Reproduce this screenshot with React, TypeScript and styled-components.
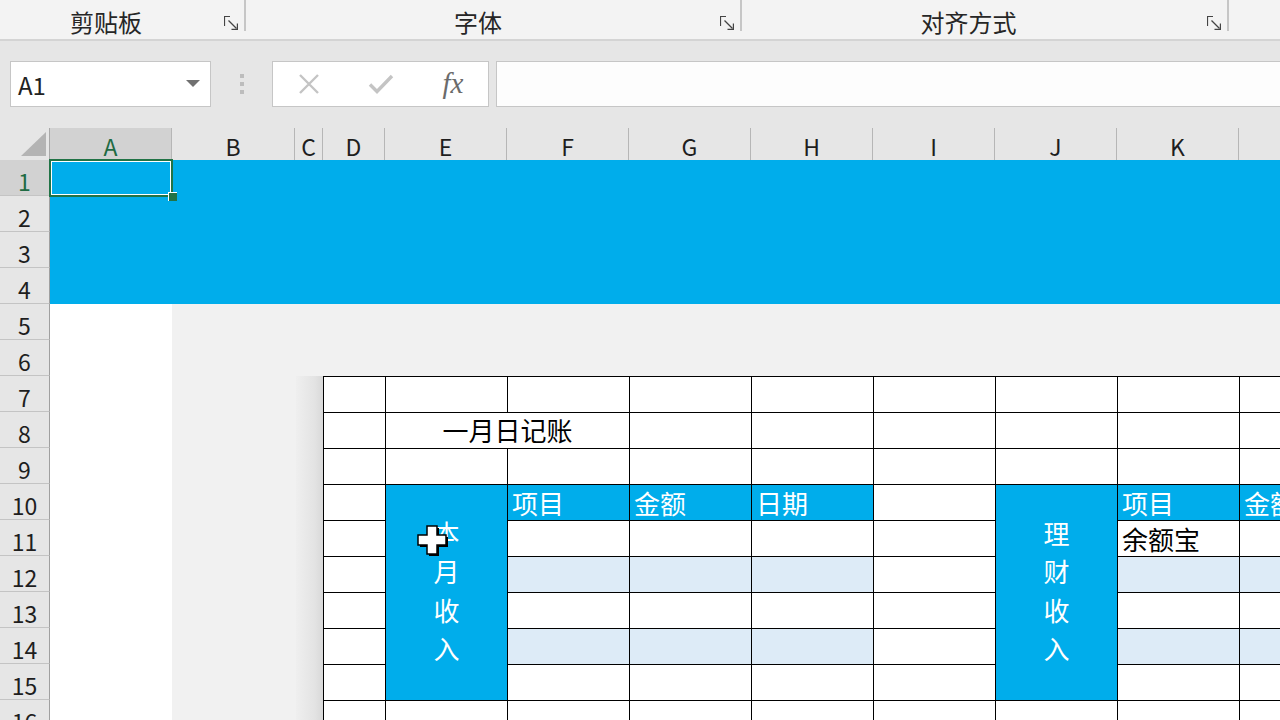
import React from 'react';
import styled, { createGlobalStyle } from 'styled-components';

const FONT = `"Noto Sans CJK SC", "Noto Sans", "Liberation Sans", sans-serif`;

const GlobalStyle = createGlobalStyle`
  html, body { margin: 0; padding: 0; background: #e6e6e6; }
  body { font-family: ${FONT}; }
  *, *::before, *::after { box-sizing: border-box; }
`;

const Root = styled.div`
  position: relative;
  width: 1280px;
  height: 720px;
  overflow: hidden;
  background: #e6e6e6;
  display: flex;
  flex-direction: column;
`;

/* ---------- ribbon group labels ---------- */
const RibbonBar = styled.div`
  display: flex;
  height: 41px;
  flex-shrink: 0;
  background: #f3f3f3;
  border-bottom: 2px solid #d4d4d4;
`;

const RibbonGroup = styled.div<{ $w: number; $pr: number }>`
  position: relative;
  flex-shrink: 0;
  width: ${(p) => p.$w}px;
  height: 31px;
  border-right: 2px solid #c6c6c6;
  display: flex;
  justify-content: center;
  align-items: flex-start;
  padding-top: 10px;
  padding-right: ${(p) => p.$pr}px;
  font-size: 24px;
  line-height: 24px;
  color: #262626;
  white-space: nowrap;
`;

const Launcher = styled.svg`
  position: absolute;
  right: 6px;
  top: 16px;
`;

/* ---------- formula bar ---------- */
const FormulaRow = styled.div`
  display: flex;
  align-items: flex-start;
  height: 87px;
  flex-shrink: 0;
  padding: 20px 0 0 10px;
`;

const NameBox = styled.div`
  width: 201px;
  height: 46px;
  background: #fff;
  border: 1px solid #c6c6c6;
  display: flex;
  align-items: center;
  justify-content: space-between;
  padding: 0 10px 0 7px;
  font-size: 24px;
  color: #222;
`;

const Dots = styled.div`
  width: 61px;
  height: 46px;
  display: flex;
  flex-direction: column;
  align-items: center;
  justify-content: center;
  gap: 4px;
`;

const Dot = styled.span`
  width: 4px;
  height: 4px;
  background: #bdbdbd;
`;

const FxBox = styled.div`
  width: 217px;
  height: 46px;
  background: #fff;
  border: 1px solid #c6c6c6;
  display: grid;
  grid-template-columns: repeat(3, 72px);
  align-items: center;
  justify-items: center;
`;

const FxText = styled.span`
  font-family: "Liberation Serif", "DejaVu Serif", serif;
  font-style: italic;
  font-size: 29px;
  line-height: 1;
  color: #6b6b6b;
  margin-top: -2px;
`;

const FormulaInput = styled.div`
  flex: 1;
  height: 46px;
  margin-left: 7px;
  background: #fdfdfd;
  border: 1px solid #c6c6c6;
  border-right: none;
`;

/* ---------- sheet ---------- */
const COLS = ['A', 'B', 'C', 'D', 'E', 'F', 'G', 'H', 'I', 'J', 'K', 'L'];
const COL_W = [122, 123, 28, 62, 122, 122, 122, 122, 122, 122, 122, 122];

const Sheet = styled.div`
  display: grid;
  grid-template-columns: 50px ${COL_W.map((w) => `${w}px`).join(' ')};
  grid-template-rows: 32px repeat(16, 36px);
  flex-shrink: 0;
`;

const Corner = styled.div`
  grid-column: 1;
  grid-row: 1;
  background: #e6e6e6;
  border-right: 1px solid #a8a8a8;
  display: flex;
  align-items: flex-end;
  justify-content: flex-end;
  padding: 0 3px 4px 0;
`;

const ColHeader = styled.div<{ $sel?: boolean }>`
  grid-row: 1;
  background: ${(p) => (p.$sel ? '#d2d2d2' : '#e6e6e6')};
  color: ${(p) => (p.$sel ? '#1f6b43' : '#1e1e1e')};
  border-right: 1px solid #b6b6b6;
  display: flex;
  align-items: center;
  justify-content: center;
  padding-top: 4px;
  font-size: 23px;
  line-height: 1;
`;

const RowHeader = styled.div<{ $sel?: boolean }>`
  grid-column: 1;
  background: ${(p) => (p.$sel ? '#d2d2d2' : '#e6e6e6')};
  color: ${(p) => (p.$sel ? '#1f6b43' : '#1e1e1e')};
  border-right: 1px solid #a0a0a0;
  border-bottom: 1px solid #c4c4c4;
  display: flex;
  align-items: center;
  justify-content: center;
  padding-top: 8px;
  font-size: 23px;
  line-height: 1;
`;

const BlueBand = styled.div`
  grid-column: 2 / -1;
  grid-row: 2 / 6;
  background: #00adeb;
`;

const WhiteColumn = styled.div`
  grid-column: 2;
  grid-row: 6 / -1;
  background: #fff;
`;

const GreyArea = styled.div`
  grid-column: 3 / -1;
  grid-row: 6 / -1;
  background: #f1f1f1;
`;

const PictureShadow = styled.div`
  grid-column: 4;
  grid-row: 8 / -1;
  margin-left: 1px;
  background: linear-gradient(to right, #efefef, #e3e3e3 70%, #d8d8d8);
`;

const Selection = styled.div`
  grid-column: 2;
  grid-row: 2;
  margin: -1px -1px -1px -1px;
  position: relative;
  z-index: 2;
  border: 2px solid #217346;
  box-shadow: inset 0 0 0 1px #ffffff;
  &::after {
    content: '';
    position: absolute;
    right: -6px;
    bottom: -6px;
    width: 9px;
    height: 9px;
    background: #217346;
    border-left: 1px solid #ffffff;
    border-top: 1px solid #ffffff;
  }
`;

/* ---------- the table ---------- */
const Table = styled.div`
  grid-column: 5 / -1;
  grid-row: 8 / -1;
  display: grid;
  grid-template-columns: 62px repeat(8, 122px);
  grid-template-rows: repeat(10, 36px);
  border-top: 1px solid #000;
  border-left: 1px solid #000;
  z-index: 1;
`;

type Tone = 'white' | 'blue' | 'light';
const TONE_BG: Record<Tone, string> = { white: '#ffffff', blue: '#00adeb', light: '#ddebf7' };

const TCell = styled.div<{ $c: number; $r: number; $cs: number; $rs: number; $tone: Tone }>`
  grid-column: ${(p) => p.$c + 1} / span ${(p) => p.$cs};
  grid-row: ${(p) => p.$r + 1} / span ${(p) => p.$rs};
  background: ${(p) => TONE_BG[p.$tone]};
  color: ${(p) => (p.$tone === 'blue' ? '#ffffff' : '#000000')};
  border-right: 1px solid #000;
  border-bottom: 1px solid #000;
  display: flex;
  align-items: center;
  padding-left: 4px;
  font-size: 26px;
  line-height: 1.2;
  white-space: nowrap;
  overflow: hidden;
`;

const TitleCell = styled(TCell)`
  justify-content: center;
  padding: 0 0 2px 0;
  overflow: visible;
`;

const VerticalCell = styled(TCell)`
  flex-direction: column;
  justify-content: center;
  padding: 0 0 4px 0;
  line-height: 38.5px;
`;

const Cursor = styled.svg`
  position: absolute;
  left: 415px;
  top: 523px;
  z-index: 5;
`;

type CellSpec = { c: number; r: number; cs?: number; rs?: number; tone?: Tone; text?: string; kind?: 'title' | 'vertical' };

function buildCells(): CellSpec[] {
  const merges: CellSpec[] = [
    { r: 1, c: 1, cs: 2, text: '一月日记账', kind: 'title' },
    { r: 3, c: 1, rs: 6, tone: 'blue', text: '本月收入', kind: 'vertical' },
    { r: 3, c: 6, rs: 6, tone: 'blue', text: '理财收入', kind: 'vertical' },
  ];
  const covered = (r: number, c: number) =>
    merges.some((m) => r >= m.r && r < m.r + (m.rs ?? 1) && c >= m.c && c < m.c + (m.cs ?? 1));
  const headers: Record<number, string> = { 2: '项目', 3: '金额', 4: '日期', 7: '项目', 8: '金额' };
  const dataCols = [2, 3, 4, 7, 8];
  const out: CellSpec[] = [...merges];
  for (let r = 0; r < 10; r++) {
    for (let c = 0; c < 9; c++) {
      if (covered(r, c)) continue;
      let tone: Tone = 'white';
      let text = '';
      if (r === 3 && headers[c]) {
        tone = 'blue';
        text = headers[c];
      } else if ((r === 5 || r === 7) && dataCols.includes(c)) {
        tone = 'light';
      }
      if (r === 4 && c === 7) text = '余额宝';
      out.push({ r, c, tone, text });
    }
  }
  return out;
}

const CELLS = buildCells();

const LauncherIcon = () => (
  <Launcher width="14" height="14" viewBox="0 0 14 14">
    <path d="M0.5 10V0.5H6" fill="none" stroke="#444" strokeWidth="1.2" />
    <path d="M4.5 4.5L12.5 12.5" fill="none" stroke="#444" strokeWidth="1.3" />
    <path d="M7.5 13.4H13.4V7.5" fill="none" stroke="#444" strokeWidth="1.2" />
  </Launcher>
);

export default function App() {
  return (
    <Root>
      <GlobalStyle />
      <RibbonBar>
        <RibbonGroup $w={246} $pr={32}>
          剪贴板
          <LauncherIcon />
        </RibbonGroup>
        <RibbonGroup $w={496} $pr={30}>
          字体
          <LauncherIcon />
        </RibbonGroup>
        <RibbonGroup $w={487} $pr={32}>
          对齐方式
          <LauncherIcon />
        </RibbonGroup>
      </RibbonBar>

      <FormulaRow>
        <NameBox>
          <span>A1</span>
          <svg width="14" height="8" viewBox="0 0 14 8">
            <polygon points="0,0 14,0 7,7" fill="#707070" />
          </svg>
        </NameBox>
        <Dots>
          <Dot />
          <Dot />
          <Dot />
        </Dots>
        <FxBox>
          <svg width="22" height="20" viewBox="0 0 22 20">
            <path d="M2 1L20 19M20 1L2 19" stroke="#c4c4c4" strokeWidth="2.4" fill="none" />
          </svg>
          <svg width="26" height="20" viewBox="0 0 26 20">
            <path d="M2 10.5L9 17.5L24 2" stroke="#c4c4c4" strokeWidth="3.4" fill="none" />
          </svg>
          <FxText>fx</FxText>
        </FxBox>
        <FormulaInput />
      </FormulaRow>

      <Sheet>
        <Corner>
          <svg width="25" height="24" viewBox="0 0 25 24">
            <polygon points="0,24 25,0 25,24" fill="#b4b4b4" />
          </svg>
        </Corner>
        {COLS.map((c, i) => (
          <ColHeader key={c} $sel={i === 0} style={{ gridColumn: i + 2 }}>
            {c}
          </ColHeader>
        ))}
        {Array.from({ length: 16 }, (_, i) => (
          <RowHeader key={i} $sel={i === 0} style={{ gridRow: i + 2 }}>
            {i + 1}
          </RowHeader>
        ))}
        <BlueBand />
        <WhiteColumn />
        <GreyArea />
        <PictureShadow />
        <Selection />
        <Table>
          {CELLS.map((cell) => {
            const props = {
              $c: cell.c,
              $r: cell.r,
              $cs: cell.cs ?? 1,
              $rs: cell.rs ?? 1,
              $tone: cell.tone ?? 'white',
            };
            const key = `${cell.r}-${cell.c}`;
            if (cell.kind === 'title') return <TitleCell key={key} {...props}>{cell.text}</TitleCell>;
            if (cell.kind === 'vertical')
              return (
                <VerticalCell key={key} {...props}>
                  {cell.text!.split('').map((ch, i) => (
                    <span key={i}>{ch}</span>
                  ))}
                </VerticalCell>
              );
            return <TCell key={key} {...props}>{cell.text}</TCell>;
          })}
        </Table>
      </Sheet>

      <Cursor width="36" height="36" viewBox="0 0 36 36">
        <path d="M12 3h10v9h9v10h-9v9H12v-9H3V12h9z" transform="translate(2 2)" fill="#000" />
        <path d="M12 3h10v9h9v10h-9v9H12v-9H3V12h9z" fill="#fff" stroke="#000" strokeWidth="1.5" />
      </Cursor>
    </Root>
  );
}
